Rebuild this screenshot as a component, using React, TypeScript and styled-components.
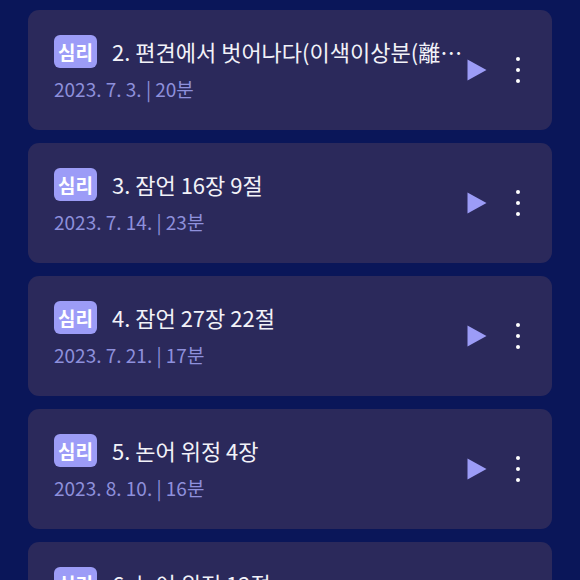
import React from "react";
import styled, { createGlobalStyle } from "styled-components";

const Global = createGlobalStyle`
  html, body { margin: 0; padding: 0; background: #0a1659; }
  body { font-family: "Noto Sans CJK KR", "Noto Sans", sans-serif; }
`;

const List = styled.div`
  display: flex;
  flex-direction: column;
  gap: 13px;
  padding: 10px 28px;
`;

const Card = styled.div`
  display: flex;
  align-items: center;
  height: 120px;
  box-sizing: border-box;
  padding: 0 32px 0 26px;
  background: #2b295b;
  border-radius: 11px;
`;

const Info = styled.div`
  flex: 1;
  min-width: 0;
  display: flex;
  flex-direction: column;
  gap: 8px;
  margin-top: -4px;
`;

const TitleRow = styled.div`
  display: flex;
  align-items: center;
  gap: 15px;
  min-width: 0;
`;

const Badge = styled.span`
  flex: none;
  display: inline-flex;
  align-items: center;
  justify-content: center;
  width: 43px;
  height: 33px;
  border-radius: 6px;
  background: #9c9cf7;
  color: #ffffff;
  font-size: 19px;
  font-weight: 700;
  line-height: 1;
`;

const Title = styled.span`
  flex: 1;
  min-width: 0;
  color: #f2f2f8;
  font-size: 22px;
  line-height: 30px;
  white-space: nowrap;
  overflow: hidden;
  text-overflow: ellipsis;
`;

const Meta = styled.div`
  color: #8e90dc;
  font-size: 19px;
  line-height: 26px;
  white-space: nowrap;
`;

const Actions = styled.div`
  flex: none;
  display: flex;
  align-items: center;
  gap: 29px;
  margin-left: 1px;
`;

const PlayButton = styled.button`
  border: 0;
  padding: 0;
  background: none;
  width: 20px;
  height: 22px;
  display: flex;
  align-items: center;
  justify-content: center;
  cursor: pointer;
`;

const MoreButton = styled.button`
  border: 0;
  padding: 0;
  background: none;
  width: 4px;
  height: 26px;
  display: flex;
  flex-direction: column;
  align-items: center;
  justify-content: center;
  gap: 7px;
  cursor: pointer;
`;

const Dot = styled.span`
  width: 4px;
  height: 4px;
  border-radius: 50%;
  background: #ffffff;
`;

const items = [
  { title: "2. 편견에서 벗어나다(이색이상분(離色離相分))", meta: "2023. 7. 3. | 20분" },
  { title: "3. 잠언 16장 9절", meta: "2023. 7. 14. | 23분" },
  { title: "4. 잠언 27장 22절", meta: "2023. 7. 21. | 17분" },
  { title: "5. 논어 위정 4장", meta: "2023. 8. 10. | 16분" },
  { title: "6. 논어 위정 12절", meta: "2023. 8. 17. | 18분" },
];

export default function App() {
  return (
    <>
      <Global />
      <List>
        {items.map((it) => (
          <Card key={it.title}>
            <Info>
              <TitleRow>
                <Badge>심리</Badge>
                <Title>{it.title}</Title>
              </TitleRow>
              <Meta>{it.meta}</Meta>
            </Info>
            <Actions>
              <PlayButton aria-label="play">
                <svg width="20" height="22" viewBox="0 0 20 22">
                  <path d="M0.5 0.5 L19.5 11 L0.5 21.5 Z" fill="#9c9cf7" />
                </svg>
              </PlayButton>
              <MoreButton aria-label="more">
                <Dot />
                <Dot />
                <Dot />
              </MoreButton>
            </Actions>
          </Card>
        ))}
      </List>
    </>
  );
}
